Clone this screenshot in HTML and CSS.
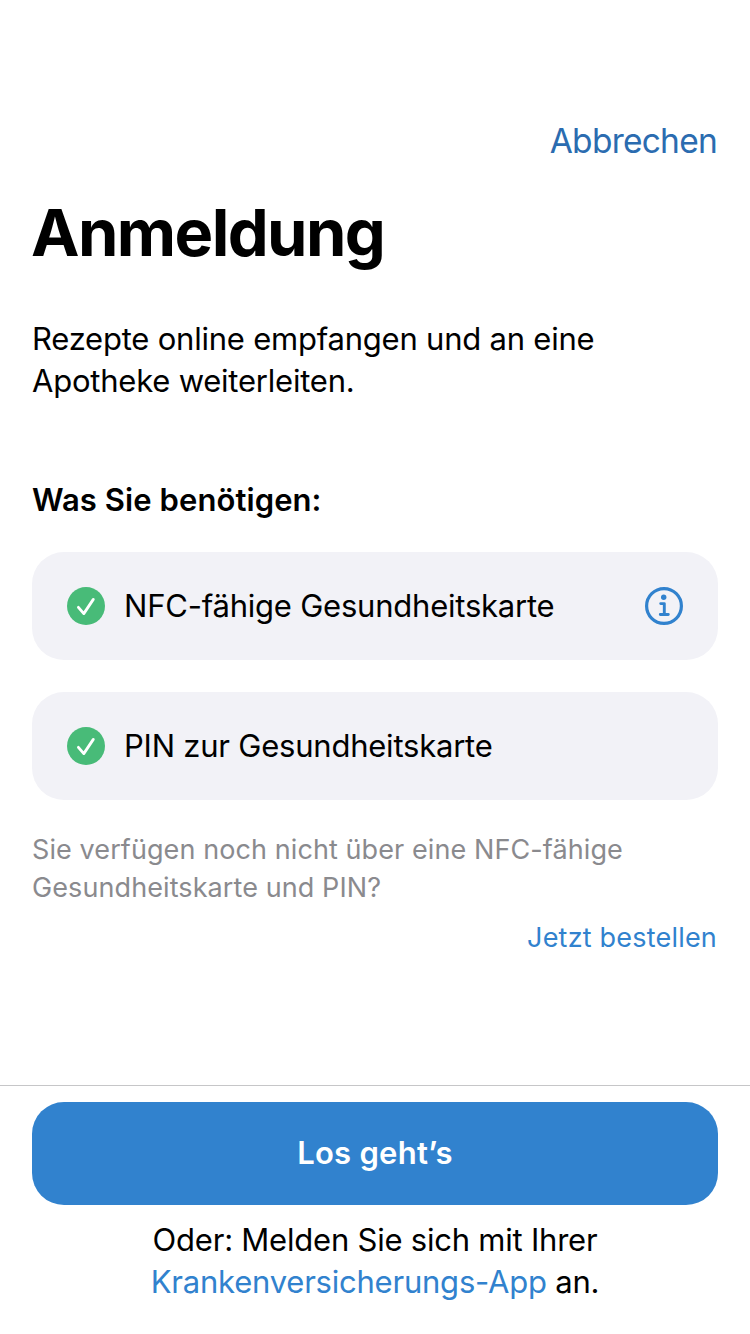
FILE: index.html
```html
<!DOCTYPE html>
<html lang="de">
<head>
<meta charset="utf-8">
<title>Anmeldung</title>
<link rel="stylesheet" href="styles.css">
</head>
<body>
<div class="screen">
  <header class="nav"><a class="cancel">Abbrechen</a></header>
  <main class="content">
    <h1 class="title">Anmeldung</h1>
    <p class="intro">Rezepte online empfangen und an eine<br>Apotheke weiterleiten.</p>
    <h2 class="subtitle">Was Sie benötigen:</h2>
    <ul class="cards">
      <li class="card">
        <svg class="icon" viewBox="0 0 38 38"><circle cx="19" cy="19" r="19" fill="#48bb78"/><path d="M11.400 20.300l5.400 6.300L26.300 12.400" fill="none" stroke="#fff" stroke-width="2.8" stroke-linecap="round" stroke-linejoin="round"/></svg>
        <span class="label">NFC-fähige Gesundheitskarte</span>
        <svg class="icon info" viewBox="0 0 38 38"><circle cx="19" cy="19" r="17.4" fill="none" stroke="#3182ce" stroke-width="3.2"/><circle cx="18.7" cy="10.300" r="2.7" fill="#3182ce"/><path d="M15.700 16.600h3.600v10.900M15.300 27.500h8" fill="none" stroke="#3182ce" stroke-width="2.9" stroke-linecap="round" stroke-linejoin="round"/></svg>
      </li>
      <li class="card">
        <svg class="icon" viewBox="0 0 38 38"><circle cx="19" cy="19" r="19" fill="#48bb78"/><path d="M11.400 20.300l5.400 6.300L26.300 12.400" fill="none" stroke="#fff" stroke-width="2.8" stroke-linecap="round" stroke-linejoin="round"/></svg>
        <span class="label">PIN zur Gesundheitskarte</span>
      </li>
    </ul>
    <p class="hint">Sie verfügen noch nicht über eine NFC-fähige<br>Gesundheitskarte und PIN?</p>
    <a class="order">Jetzt bestellen</a>
  </main>
  <footer class="footer">
    <button class="primary">Los geht’s</button>
    <p class="alt">Oder: Melden Sie sich mit Ihrer<br><a class="link">Krankenversicherungs-App</a> an.</p>
  </footer>
</div>
</body>
</html>
```
FILE: styles.css
```css
* { box-sizing: border-box; }
body { margin: 0; background: #fff; color: #000; font-family: Inter, "Liberation Sans", sans-serif; }
h1, h2, p, ul { margin: 0; padding: 0; }
.screen { width: 750px; height: 1334px; display: flex; flex-direction: column; }
.nav { padding: 120px 33px 0; height: 160px; text-align: right; }
.cancel { color: #2b6cb0; font-size: 33.5px; line-height: 42px; letter-spacing: -0.75px; }
.content { flex: 1; padding: 32px 32px 0; display: flex; flex-direction: column; }
.title { font-size: 65px; line-height: 82px; font-weight: 700; letter-spacing: -1.6px; margin-left: -1px; }
.intro { margin-top: 44px; font-size: 31px; line-height: 42px; letter-spacing: -0.22px; }
.subtitle { margin-top: 77px; font-size: 31px; line-height: 42px; font-weight: 600; letter-spacing: 0.08px; }
.cards { margin-top: 31px; list-style: none; display: flex; flex-direction: column; gap: 32px; }
.card { height: 108px; border-radius: 32px; background: #f2f2f7; padding: 0 35px; display: flex; align-items: center; }
.icon { width: 38px; height: 38px; flex: none; margin-right: 19px; }
.info { margin: 0 0 0 auto; }
.label { font-size: 31px; line-height: 42px; letter-spacing: -0.22px; white-space: nowrap; }
.hint { margin-top: 31px; font-size: 27px; line-height: 38px; letter-spacing: 0.09px; color: #8a8a8e; }
.order { margin-top: 12px; align-self: flex-end; padding-right: 1px; color: #3182ce; font-size: 27px; line-height: 38px; letter-spacing: 0.2px; }
.footer { height: 249px; border-top: 1px solid #c6c6c8; padding: 16px 32px 0; text-align: center; }
.primary { display: block; width: 100%; height: 103px; border: 0; border-radius: 32px; padding: 0 0 2px; background: #3182ce; color: #fff; font: 600 31px/42px Inter, sans-serif; letter-spacing: 0.25px; }
.alt { margin-top: 14px; font-size: 31px; line-height: 42px; letter-spacing: -0.22px; }
.link { color: #3182ce; }
```
